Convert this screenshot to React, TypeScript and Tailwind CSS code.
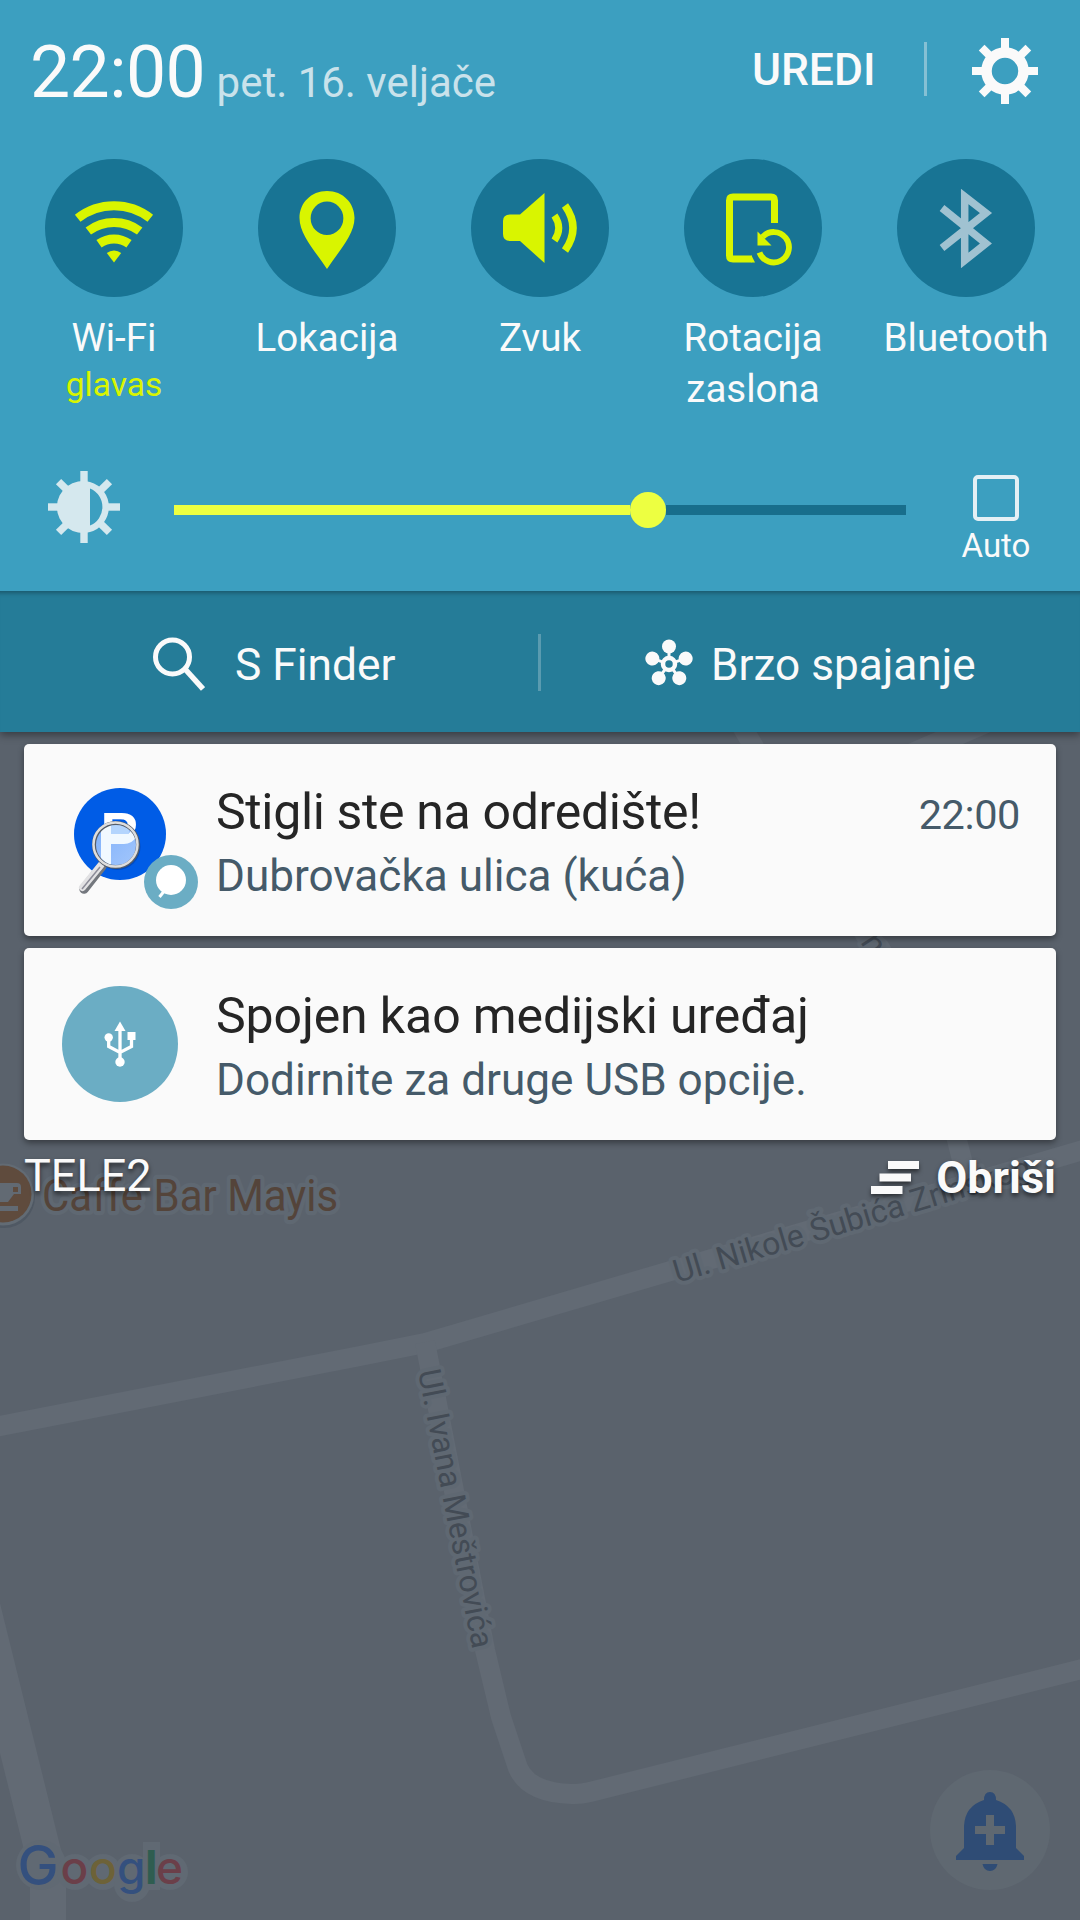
import React from "react";

const LIME = "#d9f500";

function Gear() {
  return (
    <svg viewBox="-33 -33 66 66" className="h-[66px] w-[66px]" aria-hidden="true">
      <circle r="18.5" fill="none" stroke="#fafafa" strokeWidth="10.5" />
      {[0, 45, 90, 135, 180, 225, 270, 315].map((a) => (
        <rect key={a} x="-4" y="-33" width="8" height="12" fill="#fafafa" transform={`rotate(${a})`} />
      ))}
    </svg>
  );
}

function Brightness() {
  return (
    <svg viewBox="-36 -36 72 72" className="h-[72px] w-[72px]" aria-hidden="true">
      <g fill="#d5e8ee">
        <path d="M6 -25A26 26 0 1 0 6 25A26 26 0 0 0 6 -25ZM6 -18.5A20 20 0 0 1 6 18.5Z" fillRule="evenodd" />
        {[0, 45, 90, 135, 180, 225, 270, 315].map((a) => (
          <rect key={a} x="-3.7" y="-36" width="7.4" height="13" transform={`rotate(${a})`} />
        ))}
      </g>
    </svg>
  );
}

function WifiGlyph() {
  return (
    <g fill="none" stroke={LIME} strokeWidth="9">
      <path d="M-36.3 -9.7A59 59 0 0 1 36.3 -9.7" />
      <path d="M-25.7 3A43 43 0 0 1 25.7 3" />
      <path d="M-15 15.8A26 26 0 0 1 15 15.8" />
      <path d="M0 34.5L-7.2 25A11.5 11.5 0 0 1 7.2 25Z" fill={LIME} stroke="none" />
    </g>
  );
}

function PinGlyph() {
  return (
    <path
      fill={LIME}
      fillRule="evenodd"
      d="M0 -37C-16 -37 -27.5 -25 -27.5 -10C-27.5 7 -11 24 0 41C11 24 27.5 7 27.5 -10C27.5 -25 16 -37 0 -37ZM0 -26.5A16.3 16.7 0 1 1 0 7A16.3 16.7 0 1 1 0 -26.5Z"
    />
  );
}

function SoundGlyph() {
  return (
    <g>
      <path fill={LIME} d="M4.5 -35V35L-20 13H-30Q-37 13 -37 6V-7Q-37 -13.5 -30 -13.5H-20Z" />
      <path d="M14.5 -12.5Q23 0 14.5 12.5" fill="none" stroke={LIME} strokeWidth="7" />
      <path d="M25 -22.5Q41 0 25 22.5" fill="none" stroke={LIME} strokeWidth="7.5" />
    </g>
  );
}

function RotateGlyph() {
  return (
    <g>
      <path
        d="M-1 31H-20Q-23.5 31 -23.5 27.5V-27.5Q-23.5 -31 -20 -31H18Q21.500 -31 21.500 -27.500V-5"
        fill="none"
        stroke={LIME}
        strokeWidth="7"
      />
      <path d="M-1.500 27.500L2 34.500H-1.500Z" fill={LIME} />
      <path d="M6.500 25A15.200 15.200 0 1 0 9.500 9.500" fill="none" stroke={LIME} strokeWidth="5.800" transform="translate(0 -0.500)" />
      <path d="M4.500 3.500V17.500H18.500L12 11Z" fill={LIME} />
    </g>
  );
}

function BluetoothGlyph() {
  return (
    <path
      d="M-24 -20L20 15.500L-1.300 32.500V-31.500L20 -15L-24 20"
      fill="none"
      stroke="#a0c2d1"
      strokeWidth="7.500"
      strokeMiterlimit="10"
    />
  );
}

const toggles = [
  { label: "Wi-Fi", detail: "glavas", glyph: <WifiGlyph /> },
  { label: "Lokacija", glyph: <PinGlyph /> },
  { label: "Zvuk", glyph: <SoundGlyph /> },
  { label: "Rotacija zaslona", glyph: <RotateGlyph /> },
  { label: "Bluetooth", glyph: <BluetoothGlyph /> },
];

function QuickToggle({ label, detail, glyph }: { label: string; detail?: string; glyph: React.ReactNode }) {
  return (
    <div className="flex w-[213px] flex-col items-center">
      <div className="h-[138px] w-[138px] rounded-full bg-[#187494]">
        <svg viewBox="-69 -69 138 138" className="h-full w-full" aria-hidden="true">{glyph}</svg>
      </div>
      <div className="mt-[15px] w-[170px] text-center text-[38.5px] leading-[51px] text-[#fafafa]">{label}</div>
      {detail && <div className="text-[33.5px] leading-[44px] text-[#d9f500]">{detail}</div>}
    </div>
  );
}

function ConnectIcon() {
  return (
    <svg viewBox="-24 -25 48 47" className="h-[47px] w-[48px]" aria-hidden="true">
      {[0, 72, 144, 216, 288].map((a) => (
        <g key={a} transform={`rotate(${a})`} fill="#fafafa">
          <circle cy="-17.5" r="7" />
          <rect x="-1.5" y="-14" width="3" height="8" />
        </g>
      ))}
      <circle r="6" fill="none" stroke="#fafafa" strokeWidth="4.5" />
    </svg>
  );
}

function ParkingIcon() {
  return (
    <svg viewBox="60 776 142 142" className="h-[142px] w-[142px]" aria-hidden="true">
      <defs>
        <linearGradient id="lens" x1="0" y1="0" x2="1" y2="1">
          <stop offset="0" stopColor="#7db0fa" />
          <stop offset="1" stopColor="#a3c6fc" />
        </linearGradient>
      </defs>
      <circle cx="120" cy="834" r="46" fill="#005ce6" />
      <text x="100.5" y="851" fontSize="56" fontWeight="700" fill="#fff" fontFamily="Liberation Sans, sans-serif">P</text>
      <path d="M102 866L84 889" stroke="#73777d" strokeWidth="9.500" strokeLinecap="round" />
      <path d="M101 865L82.500 887.500" stroke="#e2e2e4" strokeWidth="7" strokeLinecap="round" />
      <path d="M100 867L82 889" stroke="#8c8c98" strokeWidth="1.500" />
      <circle cx="117.500" cy="847" r="23" fill="#00318a" opacity=".4" />
      <circle cx="116" cy="845" r="21.500" fill="url(#lens)" />
      <path d="M101 831Q104 826 111 823V834H128Q132 831 131 828Q135 832 136 837Q132 844 124 844H111V865Q104 862 101 858Z" fill="#f1f9ff" />
      <path d="M111 823V834H128Q130 832 129 829Q121 822 111 823Z" fill="#b4d5fd" />
      <circle cx="116" cy="845" r="22" fill="none" stroke="#555d68" strokeWidth="4" />
      <circle cx="115.500" cy="844.500" r="22" fill="none" stroke="#dedede" strokeWidth="2.500" />
      <circle cx="171" cy="882" r="27" fill="#6badc4" />
      <circle cx="171" cy="880" r="15" fill="#fff" />
      <path d="M165 890L159.500 897" stroke="#fff" strokeWidth="3" />
    </svg>
  );
}

function UsbIcon() {
  return (
    <svg viewBox="-58 -58 116 116" className="h-[116px] w-[116px]" aria-hidden="true">
      <circle r="58" fill="#6badc4" />
      <g fill="#fff">
        <path d="M0 -22.500L5.500 -13H-5.500Z" />
        <circle cx="-11.300" cy="-6.500" r="4.200" />
        <rect x="7.500" y="-12" width="8" height="8" />
        <circle cy="18" r="4.700" />
      </g>
      <path d="M0 -14V18M-11.300 -5V2.500L0 8.500L11.500 2.500V-5" fill="none" stroke="#fff" strokeWidth="3.300" />
    </svg>
  );
}

function Notification({ icon, title, body, time }: { icon: React.ReactNode; title: React.ReactNode; body: string; time?: string }) {
  return (
    <section className="flex h-[192px] rounded-[5px] bg-[#fafafa] shadow-[0_3px_6px_rgba(0,0,0,0.4)]">
      <div className="flex w-[192px] shrink-0 items-center">{icon}</div>
      <div className="flex flex-1 flex-col pt-[36px]">
        <div className="flex h-[64px] items-baseline justify-between pr-[36px]">
          <h2 className="text-[50px] leading-[64px] tracking-[-0.13px] text-[#252525]">{title}</h2>
          {time && <time className="text-[41.5px] leading-[50px] tracking-[-0.4px] text-[#455a69]">{time}</time>}
        </div>
        <p className="text-[44.1px] leading-[64px] text-[#455a69]">{body}</p>
      </div>
    </section>
  );
}

const halo = {
  stroke: "#5f6872",
  strokeWidth: 8,
  strokeLinejoin: "round" as const,
  paintOrder: "stroke",
};

function MapBackdrop() {
  return (
    <svg viewBox="0 0 1080 1920" className="absolute inset-0 h-[1920px] w-[1080px]" fontFamily="Roboto, sans-serif" aria-hidden="true">
      <rect width="1080" height="1920" fill="#5a626c" />
      <g fill="none" stroke="#626a74" strokeWidth="20" strokeLinejoin="round">
        <path d="M-10 1428L360 1356L425 1343L1090 1148" />
        <path d="M425 1342L485 1650L501 1717L518 1768Q529 1793 572 1794Q580 1794.5 590 1792L1090 1667" />
        <path d="M-30 1557L43 1852L48 1870V1930" strokeWidth="36" />
        <path d="M738 720L866 936L880 948Q930 1040 957 1140L967 1180" />
        <path d="M1000 716L880 768" strokeWidth="22" />
      </g>
      <g fontSize="32" fill="#434b55">
        <text transform="translate(677 1283) rotate(-16.6)" {...halo}>Ul. Nikole Šubića Zrinskog</text>
        <text transform="translate(418 1371.500) rotate(78.900)" fontSize="31.600" {...halo}>Ul. Ivana Meštrovića</text>
        <text transform="translate(860 942) rotate(57)" fontSize="33" {...halo}>n</text>
      </g>
      <circle cx="4" cy="1197" r="31" fill="#4f5863" />
      <circle cx="3" cy="1194.500" r="31" fill="#626b74" />
      <circle cx="3" cy="1194" r="28.500" fill="#5f4b3d" />
      <path
        d="M0 1183H17Q21 1183 21 1187V1194H14L8 1202H0ZM13 1187V1192H18V1187ZM0 1206H18V1211H0Z"
        fill="#626a73"
        fillRule="evenodd"
      />
      <text transform="translate(42 1211) scale(1 1.050)" fontSize="42" fill="#54443a" {...halo}>Caffe Bar Mayis</text>

      <circle cx="990" cy="1830" r="60" fill="#5f6871" />
      <path
        d="M990 1792Q996 1792 996 1800Q1015 1806 1016 1826V1848L1024 1856V1860H956V1856L964 1848V1826Q965 1806 984 1800Q984 1792 990 1792ZM982.500 1864H997.500Q996 1871 990 1871Q984 1871 982.500 1864Z"
        fill="#2f4c75"
      />
      <path d="M990 1815V1845M975 1830H1005" stroke="#5f6871" strokeWidth="8" />

      <g fill="#606973">
        <circle cx="41" cy="1865" r="25" />
        <circle cx="75" cy="1872" r="18" />
        <circle cx="103" cy="1872" r="18" />
        <circle cx="132" cy="1872" r="18" />
        <circle cx="132" cy="1884" r="18" />
        <rect x="143" y="1842" width="17" height="48" />
        <circle cx="170" cy="1872" r="18" />
      </g>
      <g fontFamily="Inter, sans-serif" fontSize="46" fontWeight="500">
        <text y="1884">
          <tspan x="17.500" y="1885" fontSize="55" fill="#34507e">G</tspan>
          <tspan x="60.500" y="1884" fill="#6b3f49">o</tspan>
          <tspan x="89" fill="#6d6238">o</tspan>
          <tspan x="117" fill="#34507e">g</tspan>
          <tspan x="145" fill="#2f5d50" fontWeight="700">l</tspan>
          <tspan x="156" fill="#6b3f49">e</tspan>
        </text>
      </g>
    </svg>
  );
}

export default function App() {
  return (
    <div className="relative isolate h-[1920px] w-[1080px] overflow-hidden font-[Roboto,sans-serif]">
      <MapBackdrop />
      <div className="relative flex flex-col">
        <div className="relative z-10 shadow-[0_3px_8px_rgba(0,0,0,0.4)]">
          <div className="flex h-[591px] flex-col bg-[#3c9fc0]">
            <header className="flex h-[159px] justify-between pl-[30px] pr-[42px]">
              <div className="flex h-[124px] items-baseline pt-[29px]">
                <span className="text-[71.5px] leading-[88px] tracking-[-0.6px] text-[#fafafa]">22:00</span>
                <span className="ml-[11.5px] text-[42px] text-[#c9e2eb]">pet. 16. veljače</span>
              </div>
              <div className="flex h-[142px] items-center">
                <span className="-mt-[2px] text-[44.4px] font-medium text-[#fafafa]">UREDI</span>
                <span className="ml-[48.5px] mr-[45px] -mt-[4px] h-[54px] w-[3px] bg-[#85c0d4]" />
                <Gear />
              </div>
            </header>
            <div className="ml-[7.5px] flex h-[312px] w-[1065px]">
              {toggles.map((t) => (
                <QuickToggle key={t.label} {...t} />
              ))}
            </div>
            <div className="flex pl-[48px]">
              <Brightness />
              <div className="ml-[54px] mt-[21px] flex h-[36px] w-[732px] items-center">
                <div className="h-[10px] w-[456px] bg-[#edff41]" />
                <div className="h-[36px] w-[36px] rounded-full bg-[#edff41]" />
                <div className="h-[10px] flex-1 bg-[#186e8c]" />
              </div>
              <div className="ml-[45px] mt-[4px] flex w-[90px] flex-col items-center">
                <div className="h-[46px] w-[46px] rounded-[5px] border-4 border-[#e4f0f5]" />
                <span className="mt-[5px] text-[33px] leading-[40px] text-[#fafafa]">Auto</span>
              </div>
            </div>
          </div>
          <div className="flex h-[141px] items-center bg-[#257c98] pt-[2px] shadow-[inset_0_6px_4px_-4px_rgba(0,0,0,0.3)]">
            <div className="flex w-[538px] items-center pl-[153px] pt-[2px]">
              <svg viewBox="0 0 52 54" className="h-[54px] w-[52px]" fill="none" stroke="#fafafa" aria-hidden="true">
                <circle cx="19.5" cy="20" r="17" strokeWidth="5" />
                <path d="M32 32L50 52" strokeWidth="5.5" />
              </svg>
              <span className="ml-[30px] pt-[4px] text-[44.3px] text-[#fafafa]">S Finder</span>
            </div>
            <div className="h-[57px] w-[3px] bg-[#5a9bb0]" />
            <div className="flex items-center pl-[104px] pt-[2px]">
              <span className="-mt-[2px]"><ConnectIcon /></span>
              <span className="ml-[18px] pt-[4px] text-[44.15px] text-[#fafafa]">Brzo spajanje</span>
            </div>
          </div>
        </div>

        <main className="flex flex-col gap-[12px] px-[24px] pt-[12px]">
          <Notification
            icon={<div className="ml-[36px] mt-[14px]"><ParkingIcon /></div>}
            title={<span className="tracking-[-0.34px]">Stigli ste na odredište!</span>}
            body="Dubrovačka ulica (kuća)"
            time="22:00"
          />
          <Notification
            icon={<div className="ml-[38px]"><UsbIcon /></div>}
            title="Spojen kao medijski uređaj"
            body="Dodirnite za druge USB opcije."
          />
        </main>

        <footer className="flex items-center justify-between px-[24px] pt-[10px] text-[45px] leading-[52px] text-[#fafafa] [text-shadow:0_3px_5px_rgba(0,0,0,0.6)]">
          <span className="-mt-[2px]">TELE2</span>
          <div className="flex items-center pt-[2px]">
            <svg viewBox="0 0 48 34" className="h-[34px] w-[48px] drop-shadow-[0_3px_2px_rgba(0,0,0,0.5)]" fill="#fafafa" aria-hidden="true">
              <rect x="17" width="31.5" height="8" />
              <rect x="8.5" y="12.5" width="31.5" height="8" />
              <rect y="25" width="31.5" height="8" />
            </svg>
            <span className="ml-[17px] font-bold">Obriši</span>
          </div>
        </footer>
      </div>
    </div>
  );
}
